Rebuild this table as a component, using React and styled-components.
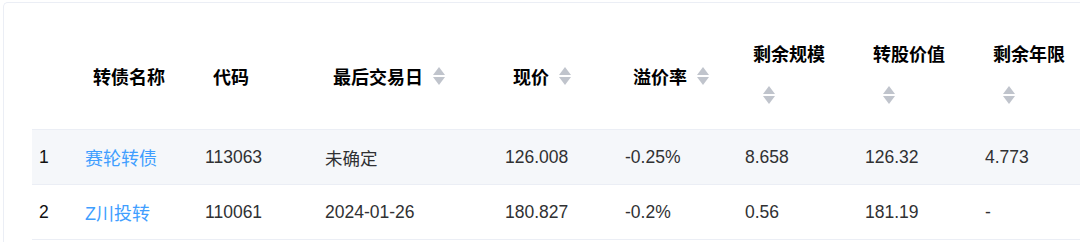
import React from "react";
import styled, { createGlobalStyle } from "styled-components";

const GlobalStyle = createGlobalStyle`
  html, body {
    margin: 0;
    padding: 0;
    background: #fff;
    overflow: hidden;
  }
  body {
    font-family: "Liberation Sans", "Noto Sans CJK SC", Arial, sans-serif;
  }
`;

const Card = styled.div`
  margin: 2px 0 0 3px;
  width: 1077px;
  height: 240px;
  padding: 20px 0 0 28px;
  border: 1px solid #ebeef5;
  border-right: 0;
  border-bottom: 0;
  border-radius: 5px 0 0 0;
  background: #fff;
  box-sizing: border-box;
  overflow: hidden;
`;

const Table = styled.table`
  table-layout: fixed;
  border-collapse: separate;
  border-spacing: 0;
  width: 1063px;
`;

const Th = styled.th`
  padding: 0;
  border-bottom: 1px solid #ebeef5;
  text-align: left;
  vertical-align: top;
`;

const HeadInner = styled.div`
  height: 106px;
  box-sizing: border-box;
  padding-left: 18px;
  display: flex;
  flex-direction: ${p => (p.stacked ? "column" : "row")};
  align-items: ${p => (p.stacked ? "flex-start" : "center")};
  justify-content: flex-start;
  padding-top: ${p => (p.stacked ? "18px" : "0")};
  gap: ${p => (p.stacked ? "21px" : "0")};
`;

const HeadLabel = styled.span`
  font-family: "Noto Sans CJK SC", "Liberation Sans", sans-serif;
  font-size: 18px;
  font-weight: 700;
  line-height: 24px;
  color: #000;
  white-space: nowrap;
`;

const Caret = styled.span`
  display: inline-flex;
  flex-direction: column;
  gap: 2px;
  margin-left: 10px;
  flex-shrink: 0;
`;

const Tri = styled.i`
  display: block;
  width: 0;
  height: 0;
  border-left: 6.5px solid transparent;
  border-right: 6.5px solid transparent;
  ${p => (p.down ? "border-top" : "border-bottom")}: 8px solid #c0c4cc;
`;

const Row = styled.tr`
  background: ${p => (p.striped ? "#f5f7fa" : "#fff")};
`;

const Td = styled.td`
  padding: 0 ${p => (p.index ? "7px" : "10px")};
  height: 54px;
  border-bottom: 1px solid #ebeef5;
  font-size: 17.5px;
  color: ${p => (p.index ? "#111" : "#303133")};
  white-space: nowrap;
  overflow: hidden;
`;

const Link = styled.a`
  color: #409eff;
  text-decoration: none;
  font-size: 18px;
`;

const SortCaret = () => (
  <Caret>
    <Tri />
    <Tri down />
  </Caret>
);

const columns = [
  { key: "idx", label: "", width: 43 },
  { key: "name", label: "转债名称", width: 120 },
  { key: "code", label: "代码", width: 120 },
  { key: "last", label: "最后交易日", width: 180, sort: true },
  { key: "price", label: "现价", width: 120, sort: true },
  { key: "premium", label: "溢价率", width: 120, sort: true },
  { key: "scale", label: "剩余规模", width: 120, sort: true, stacked: true },
  { key: "value", label: "转股价值", width: 120, sort: true, stacked: true },
  { key: "years", label: "剩余年限", width: 120, sort: true, stacked: true },
];

const rows = [
  {
    idx: 1, name: "赛轮转债", code: "113063", last: "未确定", price: "126.008",
    premium: "-0.25%", scale: "8.658", value: "126.32", years: "4.773",
  },
  {
    idx: 2, name: "Z川投转", code: "110061", last: "2024-01-26", price: "180.827",
    premium: "-0.2%", scale: "0.56", value: "181.19", years: "-",
  },
];

const App = () => (
  <>
    <GlobalStyle />
    <Card>
      <Table>
        <colgroup>
          {columns.map(c => (
            <col key={c.key} style={{ width: c.width }} />
          ))}
        </colgroup>
        <thead>
          <tr>
            {columns.map(c => (
              <Th key={c.key}>
                <HeadInner stacked={c.stacked}>
                  {c.label && <HeadLabel>{c.label}</HeadLabel>}
                  {c.sort && <SortCaret />}
                </HeadInner>
              </Th>
            ))}
          </tr>
        </thead>
        <tbody>
          {rows.map((r, i) => (
            <Row key={r.code} striped={i === 0}>
              {columns.map(c => (
                <Td key={c.key} index={c.key === "idx"}>
                  {c.key === "name" ? <Link href="#">{r.name}</Link> : r[c.key]}
                </Td>
              ))}
            </Row>
          ))}
        </tbody>
      </Table>
    </Card>
  </>
);

export default App;
